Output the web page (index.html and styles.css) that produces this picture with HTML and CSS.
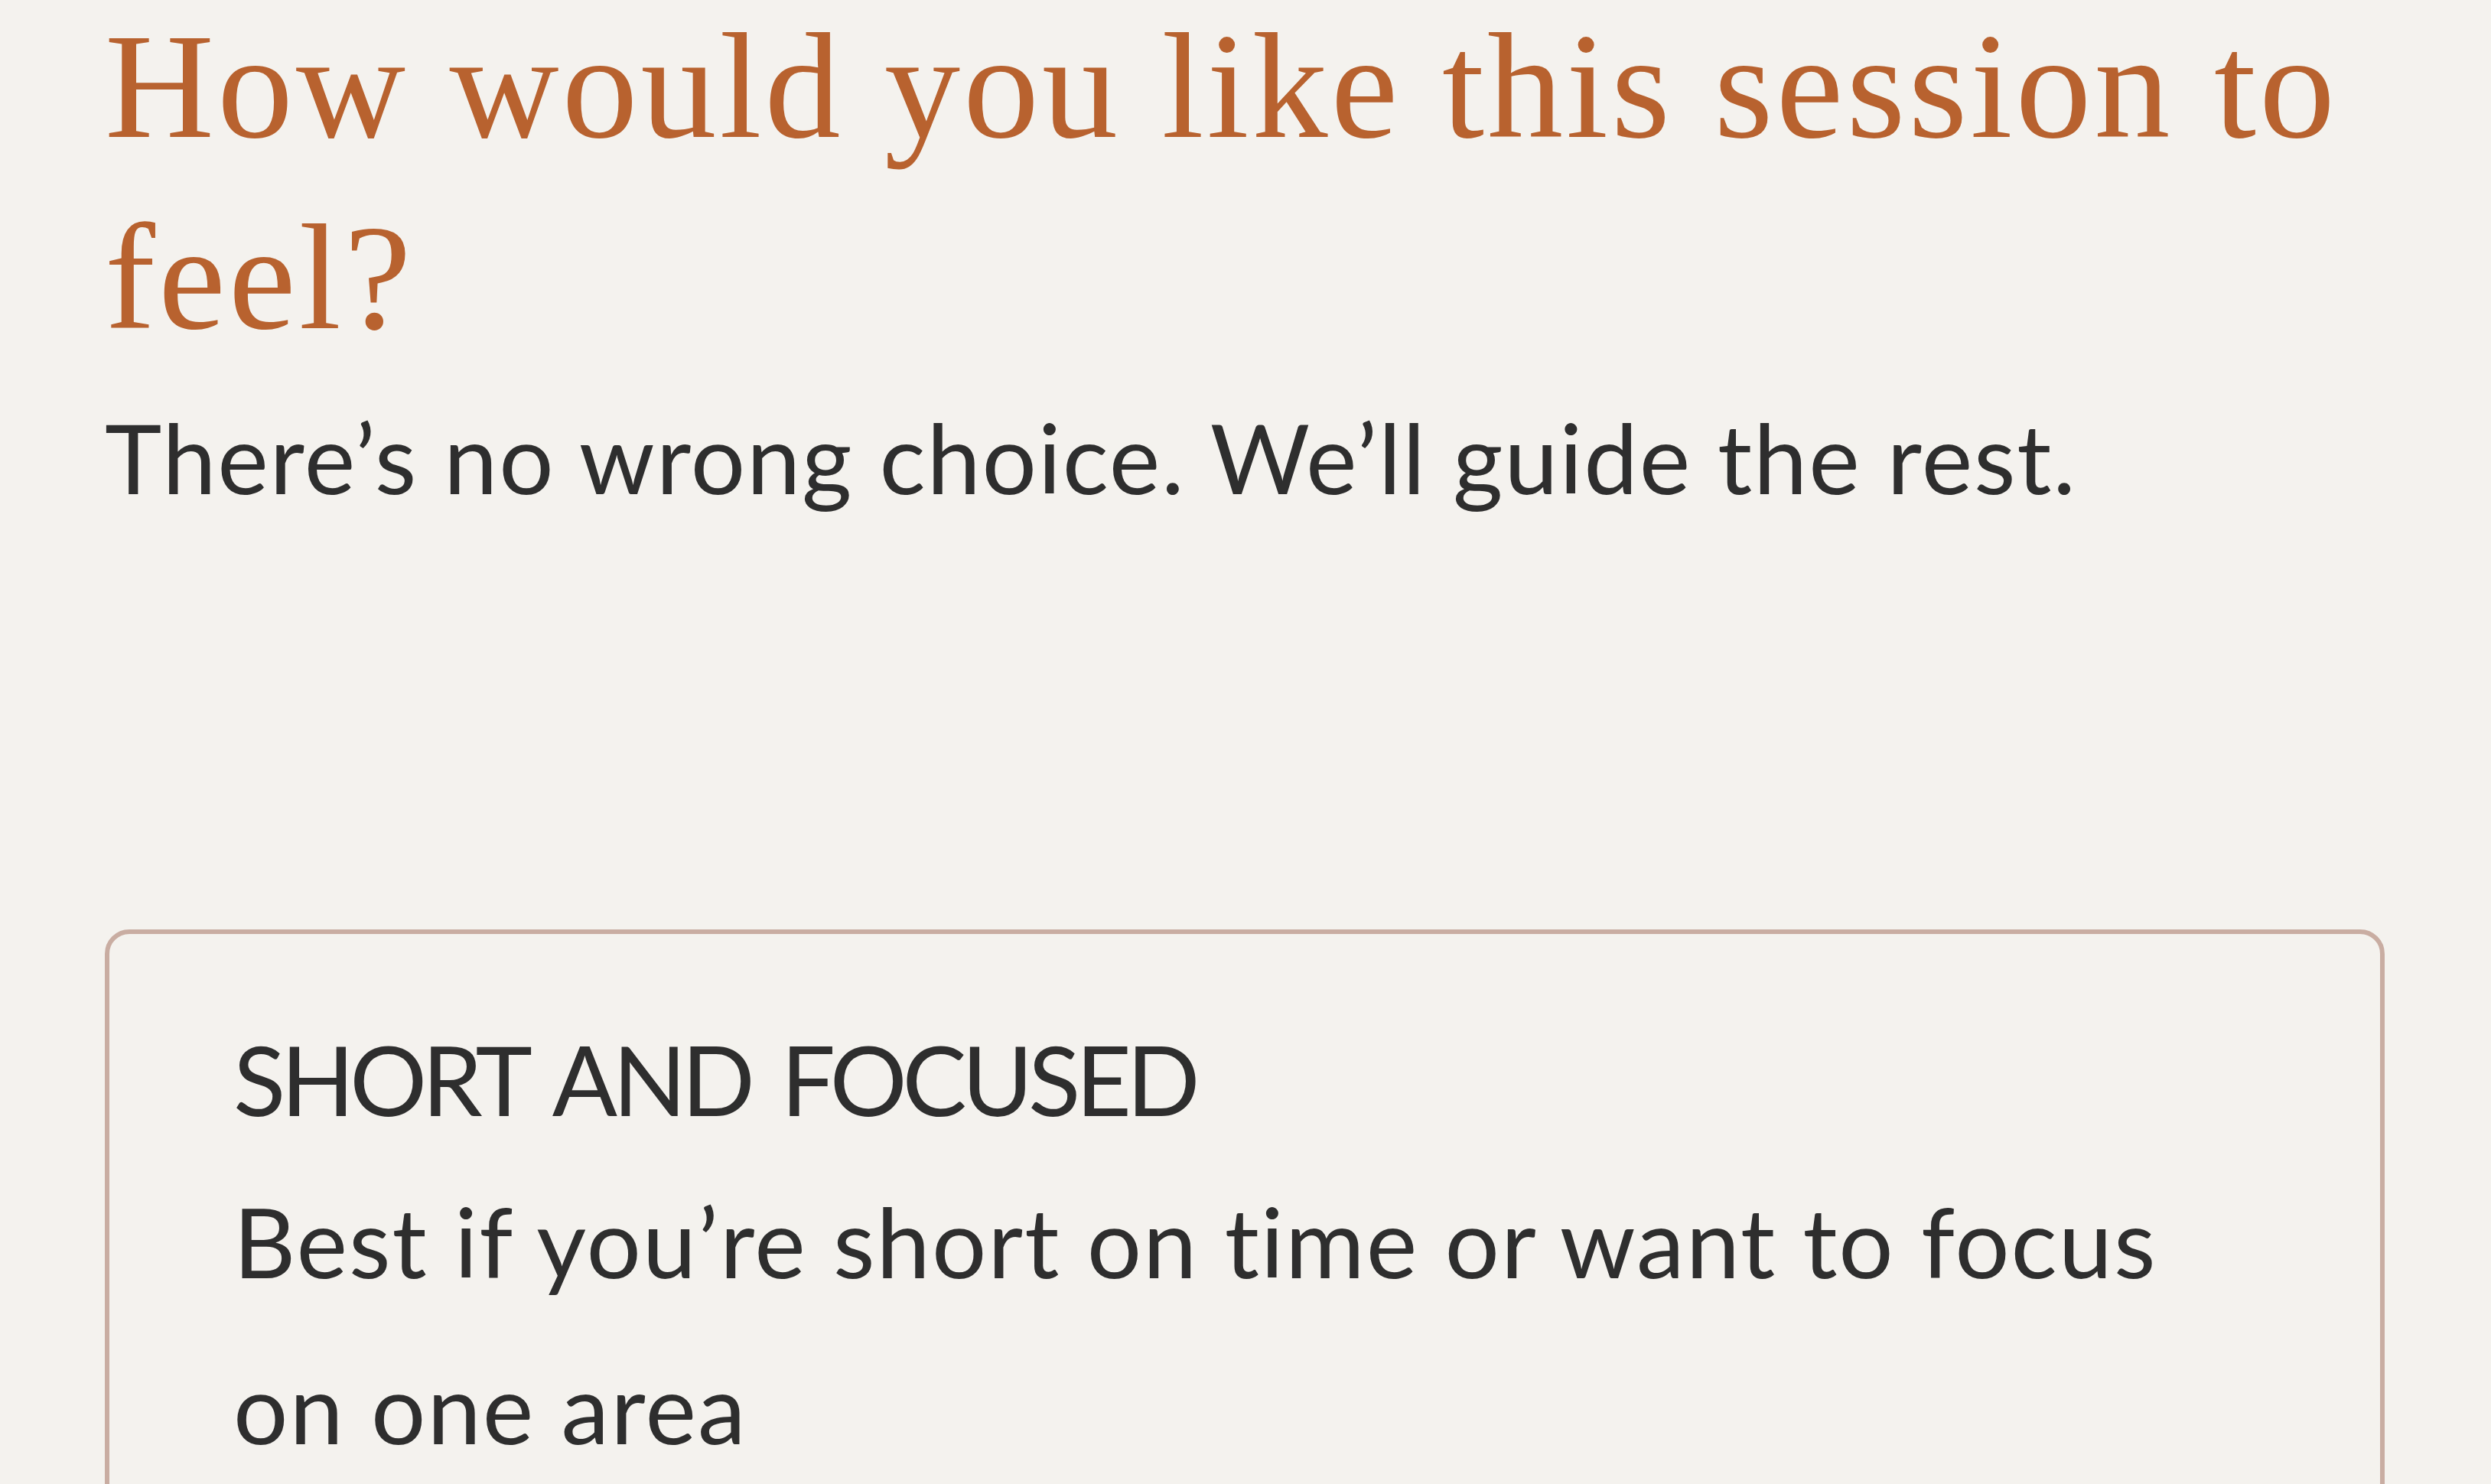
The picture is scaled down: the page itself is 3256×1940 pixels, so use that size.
FILE: index.html
```html
<!DOCTYPE html>
<html lang="en">
<head>
<meta charset="utf-8">
<title>Session feel</title>
<link rel="stylesheet" href="styles.css">
</head>
<body>
<main class="page">
  <h1 class="title">How would you like this session to feel?</h1>
  <p class="subtitle">There’s no wrong choice. We’ll guide the rest.</p>
  <section class="options">
    <div class="option-card">
      <div class="option-label">SHORT AND FOCUSED</div>
      <div class="option-desc">Best if you’re short on time or want to focus on one area</div>
    </div>
  </section>
</main>
</body>
</html>
```

FILE: styles.css
```css
html, body {
  margin: 0;
  padding: 0;
  background: #f4f2ee;
}

.page {
  padding: 0 139px 0 137px;
  box-sizing: border-box;
  width: 3256px;
}

.title {
  margin: -12px 0 0 0;
  font-family: "Liberation Serif", "DejaVu Serif", serif;
  font-weight: 400;
  font-size: 198px;
  line-height: 250px;
  letter-spacing: 4px;
  color: #b8622f;
}

.subtitle {
  margin: 30px 0 0 0;
  font-family: Lato, "Liberation Sans", sans-serif;
  font-size: 126px;
  line-height: 160px;
  letter-spacing: 1.8px;
  font-variant-ligatures: none;
  color: #2e2e2e;
}

.options {
  margin-top: 537px;
}

.option-card {
  border: 6px solid #c9ada2;
  border-radius: 32px;
  padding: 110px 200px 40px 162px;
}

.option-label {
  font-family: Lato, "Liberation Sans", sans-serif;
  font-size: 126px;
  line-height: 160px;
  letter-spacing: -6.2px;
  word-spacing: 14px;
  color: #2e2e2e;
}

.option-desc {
  margin-top: 23px;
  font-family: Lato, "Liberation Sans", sans-serif;
  font-size: 126px;
  line-height: 217px;
  letter-spacing: 2px;
  font-variant-ligatures: none;
  color: #2e2e2e;
}
```
